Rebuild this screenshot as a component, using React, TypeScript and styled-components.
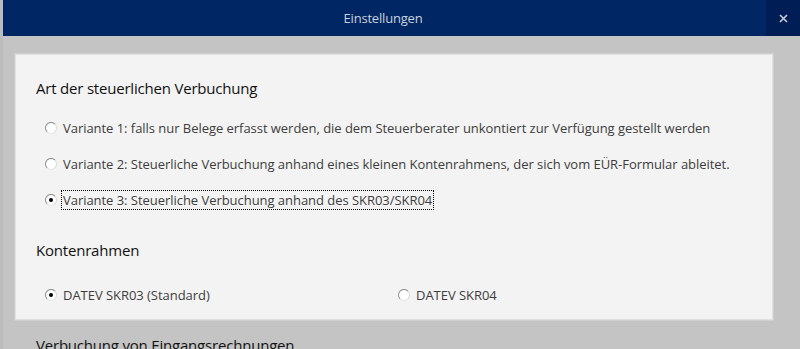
import React from 'react';
import styled, { createGlobalStyle } from 'styled-components';

const GlobalStyle = createGlobalStyle`
  html, body {
    margin: 0;
    padding: 0;
    background: #c4c4c4;
    overflow: hidden;
  }
  body {
    font-family: "Open Sans", "Noto Sans", "Liberation Sans", sans-serif;
  }
`;

const Window = styled.div`
  width: 800px;
  height: 349px;
  overflow: hidden;
  background: #c4c4c4;
  border-left: 3px solid #bcbcbc;
  box-sizing: border-box;
`;

const TitleBar = styled.div`
  display: flex;
  height: 36px;
  background: #002663;
  margin-left: -3px;
`;

const Title = styled.div`
  flex: 1;
  display: flex;
  align-items: center;
  justify-content: center;
  color: #c9d1df;
  font-size: 13px;
  letter-spacing: -0.2px;
`;

const CloseButton = styled.div`
  width: 34px;
  display: flex;
  align-items: center;
  justify-content: center;
  background: #001e55;
  color: #c8cdd8;
`;

const Content = styled.div`
  padding: 18px 27px 0 12px;
`;

const Panel = styled.div`
  background: #f3f3f3;
  border: 1px solid #e0e0e0;
  box-shadow: 0 0 0 1px #cfcfcf;
  padding: 23px 20px 6px 20px;
`;

const Heading = styled.div<{ $top?: number }>`
  font-size: 15px;
  line-height: 20px;
  color: #111111;
  margin-top: ${(p) => p.$top ?? 0}px;
  letter-spacing: -0.2px;
`;

const OptionList = styled.div<{ $columns?: number; $top?: number }>`
  display: grid;
  grid-template-columns: ${(p) => (p.$columns === 2 ? '353px 353px' : '1fr')};
  margin: ${(p) => p.$top ?? 0}px 0 0 9px;
`;

const Option = styled.label`
  display: flex;
  align-items: center;
  height: 36px;
  gap: 5px;
  font-size: 13px;
  color: #3d3d3d;
  letter-spacing: -0.04px;
`;

const Circle = styled.span<{ $checked?: boolean }>`
  position: relative;
  width: 12px;
  height: 12px;
  box-sizing: border-box;
  border-radius: 50%;
  background: #ffffff;
  border: 1px solid;
  border-color: #7c7c7c #dadada #e6e6e6 #8c8c8c;
  flex-shrink: 0;

  &::after {
    content: '';
    display: ${(p) => (p.$checked ? 'block' : 'none')};
    position: absolute;
    left: 3px;
    top: 3px;
    width: 4px;
    height: 4px;
    border-radius: 50%;
    background: #000000;
  }
`;

const Label = styled.span<{ $focused?: boolean }>`
  line-height: 18px;
  padding: 0 1px;
  outline: ${(p) => (p.$focused ? '1px dotted #000' : 'none')};
`;

const SectionHeading = styled(Heading)`
  margin-left: 21px;
  margin-top: 15px;
`;

type Radio = { label: string; checked?: boolean; focused?: boolean };

const variants: Radio[] = [
  { label: 'Variante 1: falls nur Belege erfasst werden, die dem Steuerberater unkontiert zur Verfügung gestellt werden' },
  { label: 'Variante 2: Steuerliche Verbuchung anhand eines kleinen Kontenrahmens, der sich vom EÜR-Formular ableitet.' },
  { label: 'Variante 3: Steuerliche Verbuchung anhand des SKR03/SKR04', checked: true, focused: true },
];

const frames: Radio[] = [
  { label: 'DATEV SKR03 (Standard)', checked: true },
  { label: 'DATEV SKR04' },
];

const RadioOption: React.FC<Radio> = ({ label, checked, focused }) => (
  <Option>
    <Circle $checked={checked} />
    <Label $focused={focused}>{label}</Label>
  </Option>
);

const App: React.FC = () => {
  return (
    <Window>
      <GlobalStyle />
      <TitleBar>
        <Title>Einstellungen</Title>
        <CloseButton>
          <svg width="9" height="9" viewBox="0 0 9 9">
            <path d="M1 1 L8 8 M8 1 L1 8" stroke="#c8cdd8" strokeWidth="1.6" />
          </svg>
        </CloseButton>
      </TitleBar>
      <Content>
        <Panel>
          <Heading>Art der steuerlichen Verbuchung</Heading>
          <OptionList $top={12}>
            {variants.map((v) => (
              <RadioOption key={v.label} {...v} />
            ))}
          </OptionList>
          <Heading $top={22}>Kontenrahmen</Heading>
          <OptionList $columns={2} $top={17}>
            {frames.map((f) => (
              <RadioOption key={f.label} {...f} />
            ))}
          </OptionList>
        </Panel>
        <SectionHeading>Verbuchung von Eingangsrechnungen</SectionHeading>
      </Content>
    </Window>
  );
};

export default App;
